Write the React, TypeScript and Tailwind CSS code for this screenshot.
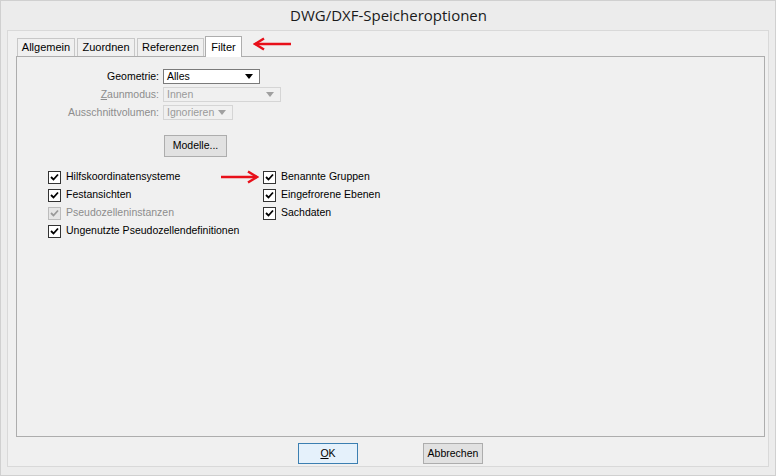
import React from 'react';

const font = { fontFamily: '"Liberation Sans", Arial, sans-serif' };

function CheckBox({ label, disabled = false }: { label: string; disabled?: boolean }) {
  return (
    <div className="flex items-center h-[18px]">
      <span
        className={`flex items-center justify-center w-[13px] h-[13px] border ${
          disabled ? 'border-[#bcbcbc] bg-[#e6e6e6]' : 'border-[#333333] bg-white'
        }`}
      >
        <svg width="9" height="8" viewBox="0 0 9 8">
          <path
            d="M1 4 L3.5 6.5 L8 1.5"
            fill="none"
            stroke={disabled ? '#9a9a9a' : '#000'}
            strokeWidth="1.8"
          />
        </svg>
      </span>
      <span className={`ml-[5px] ${disabled ? 'text-[#8d8d8d]' : 'text-black'}`}>{label}</span>
    </div>
  );
}

function Select({ value, width, disabled = false }: { value: string; width: string; disabled?: boolean }) {
  return (
    <div
      className={`flex items-center justify-between h-[15px] pl-[3px] pr-[6px] border ${width} ${
        disabled ? 'border-[#d5d5d5] bg-[#f0f0f0] text-[#9a9a9a]' : 'border-[#7a7a7a] bg-white text-black'
      }`}
    >
      <span>{value}</span>
      <svg width="8" height="5" viewBox="0 0 8 5">
        <path d="M0 0 H8 L4 5 Z" fill={disabled ? '#a0a0a0' : '#000'} />
      </svg>
    </div>
  );
}

function Tab({ label, active = false, w }: { label: string; active?: boolean; w: string }) {
  return (
    <div
      className={`flex items-center justify-center border border-b-0 text-[11px] ${w} ${
        active
          ? 'h-[21px] border-[#adadad] bg-white -mb-px z-10 relative'
          : 'h-[18px] border-[#c8c8c8] bg-[#f0f0f0]'
      }`}
    >
      {label}
    </div>
  );
}

function LeftArrow() {
  return (
    <svg width="40" height="14" viewBox="0 0 40 14">
      <path d="M2 7 H38" stroke="#e8101a" strokeWidth="2.5" />
      <path d="M11 1.5 L2 7 L11 12.5" fill="none" stroke="#e8101a" strokeWidth="2.5" />
    </svg>
  );
}

function RightArrow() {
  return (
    <svg width="38" height="14" viewBox="0 0 38 14">
      <path d="M0 7 H36" stroke="#e8101a" strokeWidth="2.5" />
      <path d="M27 1.5 L36 7 L27 12.5" fill="none" stroke="#e8101a" strokeWidth="2.5" />
    </svg>
  );
}

export default function App() {
  return (
    <div
      className="w-[776px] h-[476px] bg-[#ececec] border border-[#d0d0d0] flex flex-col text-[10.5px] text-black overflow-hidden"
      style={font}
    >
      {/* title bar */}
      <div className="h-[29px] flex items-center justify-center shrink-0">
        <span
          className="text-[15px] text-[#1a1a1a] pl-[1px]"
          style={{ fontFamily: '"Open Sans", "Noto Sans", sans-serif' }}
        >
          DWG/DXF-Speicheroptionen
        </span>
      </div>

      {/* client area */}
      <div className="ml-[6px] mr-[6px] h-[437px] border border-[#d9d9d9] bg-[#f0f0f0] flex flex-col pl-[8px] pr-[3px]">
        {/* tabs */}
        <div className="flex items-end h-[25px] pl-px">
          <Tab label="Allgemein" w="w-[58px]" />
          <div className="w-[2px]" />
          <Tab label="Zuordnen" w="w-[58px]" />
          <div className="w-[2px]" />
          <Tab label="Referenzen" w="w-[67px]" />
          <div className="w-px" />
          <Tab label="Filter" w="w-[37px]" active />
          <div className="ml-[11px] mb-[5px]">
            <LeftArrow />
          </div>
        </div>

        {/* panel */}
        <div className="h-[381px] border border-[#adadad] bg-[#f0f0f0] flex flex-col pt-[12px]">
          <div className="grid grid-cols-[142px_auto] gap-x-[4px] gap-y-[3px] items-center">
            <span className="text-right leading-[15px]">Geometrie:</span>
            <Select value="Alles" width="w-[97px]" />
            <span className="text-right leading-[15px] text-[#8d8d8d]">
              <span className="underline">Z</span>aunmodus:
            </span>
            <Select value="Innen" width="w-[118px]" disabled />
            <span className="text-right leading-[15px] text-[#8d8d8d]">Ausschnittvolumen:</span>
            <Select value="Ignorieren" width="w-[70px]" disabled />
          </div>

          <div className="ml-[147px] mt-[15px]">
            <button className="w-[63px] h-[22px] border border-[#adadad] bg-[#e1e1e1] flex items-center justify-center">
              Modelle...
            </button>
          </div>

          <div className="flex mt-[11px] pl-[31px]">
            <div className="w-[215px] flex flex-col">
              <CheckBox label="Hilfskoordinatensysteme" />
              <CheckBox label="Festansichten" />
              <CheckBox label="Pseudozelleninstanzen" disabled />
              <CheckBox label="Ungenutzte Pseudozellendefinitionen" />
            </div>
            <div className="flex flex-col relative">
              <div className="absolute left-[-42px] top-[2px]">
                <RightArrow />
              </div>
              <CheckBox label="Benannte Gruppen" />
              <CheckBox label="Eingefrorene Ebenen" />
              <CheckBox label="Sachdaten" />
            </div>
          </div>
        </div>

        {/* buttons */}
        <div className="flex mt-[6px] pl-[282px]">
          <button className="w-[60px] h-[21px] border border-[#3c7fb1] bg-[#e5f1fb] flex items-center justify-center">
            <span>
              <span className="underline">O</span>K
            </span>
          </button>
          <button className="ml-[65px] w-[60px] h-[21px] border border-[#adadad] bg-[#e1e1e1] flex items-center justify-center">
            Abbrechen
          </button>
        </div>
      </div>
    </div>
  );
}
